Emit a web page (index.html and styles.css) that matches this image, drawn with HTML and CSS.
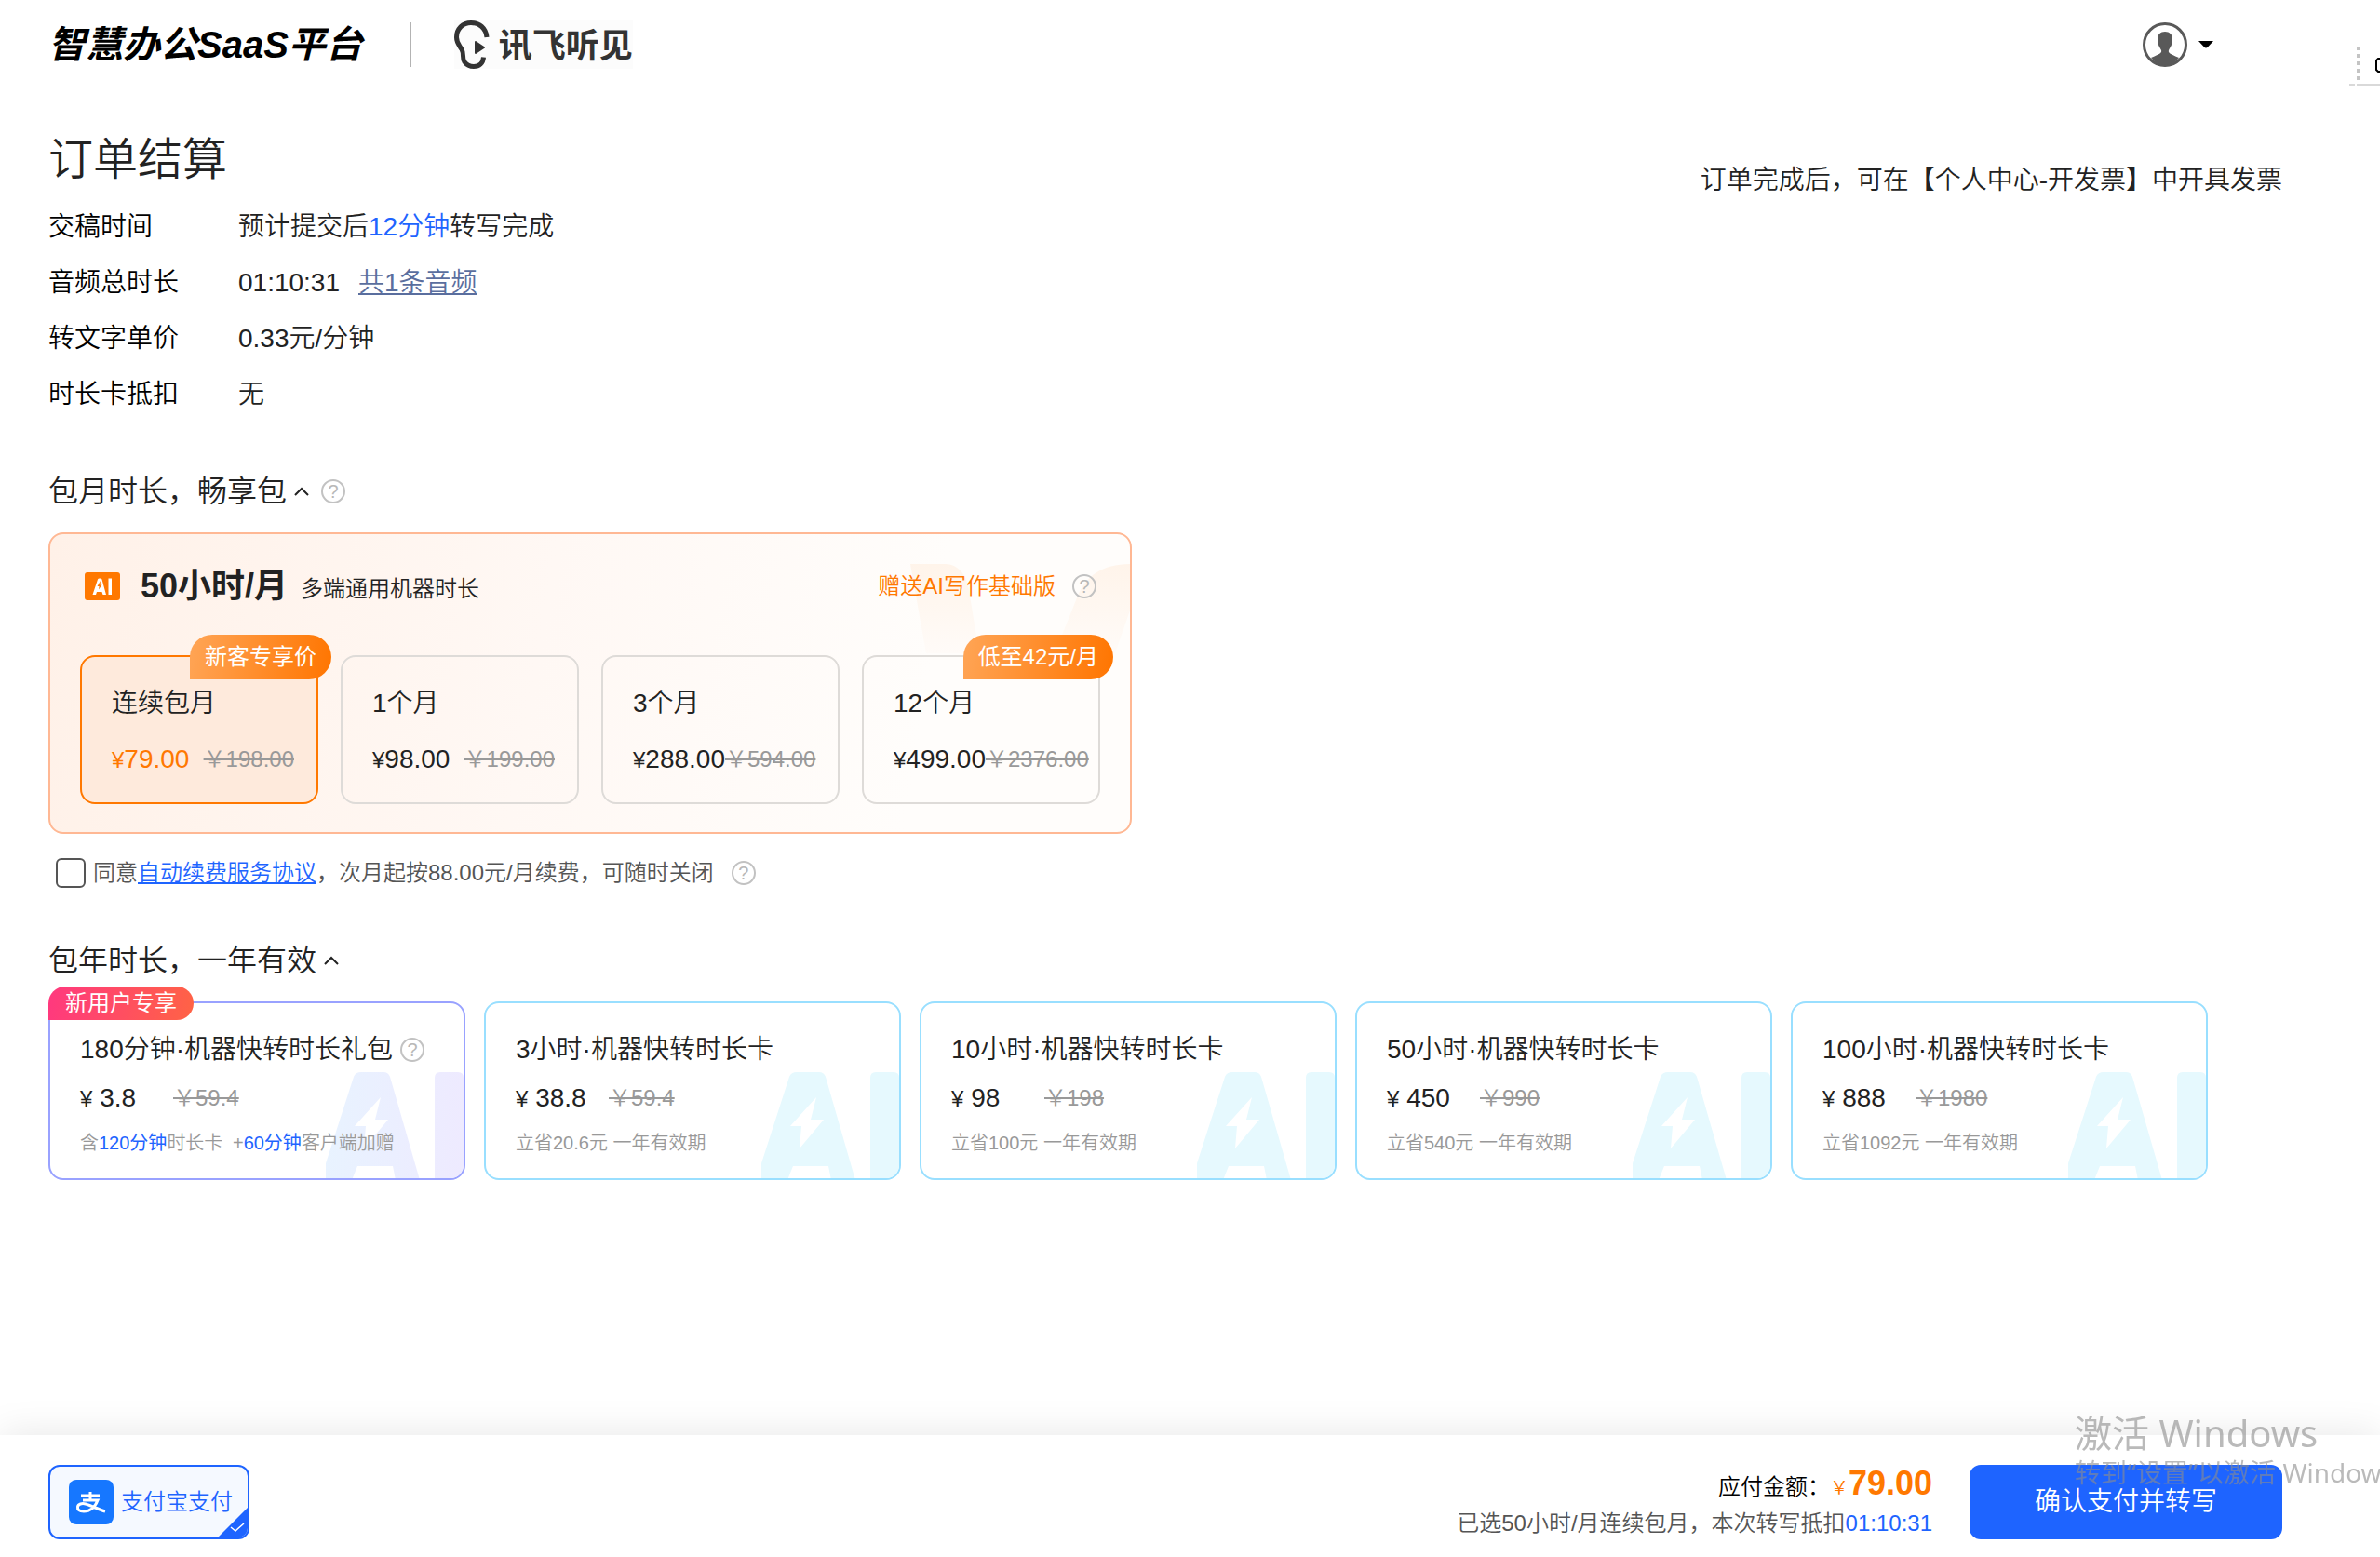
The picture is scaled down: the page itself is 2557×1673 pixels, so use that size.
FILE: index.html
```html
<!DOCTYPE html>
<html lang="zh-CN">
<head>
<meta charset="utf-8">
<title>订单结算 - 讯飞听见</title>
<link rel="stylesheet" href="styles.css">
</head>
<body>
<svg class="defs" width="0" height="0" aria-hidden="true">
  <defs>
    <linearGradient id="violet" gradientUnits="userSpaceOnUse" x1="0" y1="0" x2="150" y2="0">
      <stop offset="0" stop-color="#e8f3ff"/>
      <stop offset="1" stop-color="#eeeaff"/>
    </linearGradient>
    <linearGradient id="peach" x1="0" y1="0" x2="0" y2="1">
      <stop offset="0" stop-color="#fff4ea"/>
      <stop offset="1" stop-color="#fffbf8"/>
    </linearGradient>
    <symbol id="ai-mark" viewBox="0 0 150 114">
      <path fill-rule="evenodd" d="M40 0H64Q69 0 71 5L103 116H77L74 101H36L30 116H2V98L32 5Q34 0 40 0ZM61 27L33 58H45L43 82L69 51H55ZM125 0H144Q150 0 150 6V116H119V6Q119 0 125 0Z"/>
    </symbol>
    <symbol id="chevron" viewBox="0 0 18 12">
      <path d="M2 10L9 3L16 10" fill="none" stroke="#222" stroke-width="2"/>
    </symbol>
  </defs>
</svg>

<header class="topbar">
  <span class="brand">智慧办公SaaS平台</span>
  <span class="divider"></span>
  <a class="logo" href="#">
    <svg width="38" height="52" viewBox="0 0 38 52" aria-hidden="true">
      <path d="M35 18C34 8 27 2.500 18 2.500C9 2.500 2.500 9 2.500 18C2.500 24 5 26 8 31C11 36 8 40 11 44.500C13.500 48 17 49.500 21 49.500C27 49.500 31 46 31.500 39.500" fill="none" stroke="#333" stroke-width="5"/>
      <path d="M23 23L32 29L23 35Z" fill="#333" stroke="#333" stroke-width="2" stroke-linejoin="round"/>
    </svg>
    <span>讯飞听见</span>
  </a>
  <button class="account" type="button" aria-label="账户">
    <svg width="48" height="48" viewBox="0 0 48 48" aria-hidden="true">
      <circle cx="24" cy="24" r="22.500" fill="none" stroke="#595959" stroke-width="3"/>
      <path d="M24 10C29 10 32 13 32 18C32 24 30 26 28 30C27 33 30 34 39 38Q33 46 24 46Q15 46 9 38C18 34 21 33 20 30C18 26 16 24 16 18C16 13 19 10 24 10Z" fill="#595959"/>
    </svg>
    <svg width="16" height="8" viewBox="0 0 16 8" aria-hidden="true"><path d="M0 0H16L10 6.500Q8 8.500 6 6.500Z"/></svg>
  </button>
</header>

<main class="content">
  <div class="title-row">
    <h1>订单结算</h1>
    <p>订单完成后，可在【个人中心-开发票】中开具发票</p>
  </div>

  <dl class="facts">
    <dt>交稿时间</dt><dd>预计提交后<span class="blue">12分钟</span>转写完成</dd>
    <dt>音频总时长</dt><dd>01:10:31<a class="audio-link" href="#">共1条音频</a></dd>
    <dt>转文字单价</dt><dd>0.33元/分钟</dd>
    <dt>时长卡抵扣</dt><dd>无</dd>
  </dl>

  <section>
    <h2>包月时长，畅享包
      <svg class="chevron" width="18" height="12" aria-hidden="true"><use href="#chevron"/></svg>
      <button class="help" type="button">?</button>
    </h2>
    <div class="panel">
      <svg class="panel-mark" width="236" height="96" viewBox="0 0 236 96" aria-hidden="true">
        <path d="M0 0H36C52 0 60 12 63 28L74 96H17Z" fill="url(#peach)"/>
        <path d="M236 0C206 0 188 14 180 34L155 96H220L236 50Z" fill="url(#peach)"/>
      </svg>
      <div class="panel-head">
        <svg class="ai-badge" width="38" height="30" viewBox="0 0 38 30" aria-hidden="true">
          <rect width="38" height="30" rx="3" fill="#ff7800"/>
          <path fill-rule="evenodd" fill="#fff" d="M8.500 24L14 7.500Q14.500 6.500 15.500 6.500H17Q18 6.500 18.500 7.500L23 24H19.500L18.500 21H13L12 24ZM17 9L13.500 15H15.500L15 18.500L18.500 13.500H16.500ZM25.500 6.500H29V24H25.500Z"/>
        </svg>
        <strong>50小时/月</strong>
        <span class="scope">多端通用机器时长</span>
        <a class="gift" href="#">赠送AI写作基础版</a>
        <button class="help" type="button">?</button>
      </div>
      <div class="options">
        <label class="option selected">
          <input type="radio" name="plan" checked>
          <span class="ribbon">新客专享价</span>
          <span class="option-name">连续包月</span>
          <span class="prices"><span class="price"><small>¥</small>79.00</span><del>￥198.00</del></span>
        </label>
        <label class="option">
          <input type="radio" name="plan">
          <span class="option-name">1个月</span>
          <span class="prices"><span class="price"><small>¥</small>98.00</span><del>￥199.00</del></span>
        </label>
        <label class="option">
          <input type="radio" name="plan">
          <span class="option-name">3个月</span>
          <span class="prices"><span class="price"><small>¥</small>288.00</span><del>￥594.00</del></span>
        </label>
        <label class="option">
          <input type="radio" name="plan">
          <span class="ribbon">低至42元/月</span>
          <span class="option-name">12个月</span>
          <span class="prices"><span class="price"><small>¥</small>499.00</span><del>￥2376.00</del></span>
        </label>
      </div>
    </div>
    <div class="agree">
      <input type="checkbox" id="agree">
      <label for="agree">同意<a href="#">自动续费服务协议</a>，次月起按88.00元/月续费，可随时关闭</label>
      <button class="help" type="button">?</button>
    </div>
  </section>

  <section>
    <h2>包年时长，一年有效
      <svg class="chevron" width="18" height="12" aria-hidden="true"><use href="#chevron"/></svg>
    </h2>
    <div class="cards">
      <div class="card gift-card">
        <svg class="card-mark" width="150" height="114" fill="url(#violet)" aria-hidden="true"><use href="#ai-mark"/></svg>
        <span class="tag">新用户专享</span>
        <label><input type="radio" name="plan">180分钟·机器快转时长礼包</label>
        <button class="help" type="button">?</button>
        <p class="card-price"><span class="price"><small>¥</small> 3.8</span><del>￥59.4</del></p>
        <p class="note">含<b>120分钟</b>时长卡 <i>+</i><b>60分钟</b>客户端加赠</p>
      </div>
      <div class="card">
        <svg class="card-mark" width="150" height="114" fill="#e6f9fe" aria-hidden="true"><use href="#ai-mark"/></svg>
        <label><input type="radio" name="plan">3小时·机器快转时长卡</label>
        <p class="card-price"><span class="price"><small>¥</small> 38.8</span><del>￥59.4</del></p>
        <p class="note">立省20.6元 一年有效期</p>
      </div>
      <div class="card">
        <svg class="card-mark" width="150" height="114" fill="#e6f9fe" aria-hidden="true"><use href="#ai-mark"/></svg>
        <label><input type="radio" name="plan">10小时·机器快转时长卡</label>
        <p class="card-price"><span class="price"><small>¥</small> 98</span><del>￥198</del></p>
        <p class="note">立省100元 一年有效期</p>
      </div>
      <div class="card">
        <svg class="card-mark" width="150" height="114" fill="#e6f9fe" aria-hidden="true"><use href="#ai-mark"/></svg>
        <label><input type="radio" name="plan">50小时·机器快转时长卡</label>
        <p class="card-price"><span class="price"><small>¥</small> 450</span><del>￥990</del></p>
        <p class="note">立省540元 一年有效期</p>
      </div>
      <div class="card">
        <svg class="card-mark" width="150" height="114" fill="#e6f9fe" aria-hidden="true"><use href="#ai-mark"/></svg>
        <label><input type="radio" name="plan">100小时·机器快转时长卡</label>
        <p class="card-price"><span class="price"><small>¥</small> 888</span><del>￥1980</del></p>
        <p class="note">立省1092元 一年有效期</p>
      </div>
    </div>
  </section>
</main>

<footer class="paybar">
  <label class="method">
    <input type="radio" name="method" checked>
    <svg width="48" height="48" viewBox="0 0 48 48" aria-hidden="true">
      <rect width="48" height="48" rx="8" fill="#1677ff"/>
      <path d="M13 17H33M23 13V22M15 22H31C29 27 25 34 16 34C11 34 9 32 9.500 29C10 26 14 25 18 26C25 28 32 32 39 34" fill="none" stroke="#fff" stroke-width="3"/>
    </svg>
    <span>支付宝支付</span>
    <svg class="corner" width="34" height="34" viewBox="0 0 34 34" aria-hidden="true">
      <path d="M34 0V34H0Z" fill="#1e64ff"/>
      <path d="M15 22L20 26L29 18" fill="none" stroke="#fff" stroke-width="1.500"/>
    </svg>
  </label>
  <div class="total">
    <p>应付金额：<span class="yen">￥</span><strong>79.00</strong></p>
    <p class="detail">已选50小时/月连续包月，本次转写抵扣<span class="blue">01:10:31</span></p>
  </div>
  <button class="confirm" type="button">确认支付并转写</button>
</footer>

<div class="toolbar" aria-hidden="true">
  <svg width="33" height="42" viewBox="0 0 33 42">
    <path d="M10 0V38" stroke="#c4c4c4" stroke-width="4" stroke-dasharray="4 4"/>
    <path d="M0 41H6M8 41H33" stroke="#d9d9d9" stroke-width="2"/>
    <path d="M33 13H31L29 15V25L31 27H33" fill="none" stroke="#000" stroke-width="2"/>
  </svg>
</div>
<div class="activate">
  <p class="activate-title">激活 Windows</p>
  <p>转到“设置”以激活 Windows。</p>
</div>
</body>
</html>
```
FILE: styles.css
```css
* { box-sizing: border-box; }

body {
  margin: 0;
  min-height: 100vh;
  display: flex;
  flex-direction: column;
  overflow-x: hidden;
  background: #fff;
  color: #222;
  font: 350 28px/40px "Liberation Sans", "Noto Sans CJK SC", sans-serif;
}

h1, h2, p, dl, dd { margin: 0; font-weight: inherit; }
button, input { margin: 0; font: inherit; }
strong { font-weight: 700; }
svg { flex: none; }
.defs { position: absolute; }
.blue { color: #1e64ff; }

.topbar {
  display: flex;
  align-items: center;
  height: 96px;
  padding: 0 179px 0 52px;
}
.brand {
  color: #000;
  font-size: 40px;
  font-weight: 700;
  font-style: italic;
  white-space: nowrap;
}
.divider {
  width: 2px;
  height: 48px;
  margin: 0 46px 0 50px;
  background: #b3b3b3;
}
.logo {
  display: flex;
  align-items: center;
  gap: 10px;
  color: #333;
  font-size: 36px;
  font-weight: 700;
  text-decoration: none;
  background: #fcfcfc;
}
.logo span { padding-top: 4px; }
.account {
  display: flex;
  align-items: center;
  gap: 12px;
  margin-left: auto;
  padding: 0;
  border: 0;
  background: none;
}

.content { flex: 1; padding: 34px 105px 48px 52px; }
.title-row {
  display: flex;
  align-items: flex-end;
  justify-content: space-between;
}
h1 { font-size: 48px; line-height: 84px; }

.facts {
  display: grid;
  grid-template-columns: 204px 1fr;
  line-height: 60px;
}
.facts dt { color: #000; }
.audio-link { margin-left: 20px; color: #5a6e9e; }

section { margin-top: 50px; }
h2 {
  display: flex;
  align-items: center;
  font-size: 32px;
  line-height: 48px;
}
.chevron { margin-left: 7px; }
.help {
  flex: none;
  width: 26px;
  height: 26px;
  padding: 0;
  border: 2px solid #c2c2c2;
  border-radius: 50%;
  background: none;
  color: #b8b8b8;
  font-size: 20px;
  line-height: 22px;
}
h2 .help { margin-left: 12px; }

.panel {
  position: relative;
  width: fit-content;
  margin-top: 20px;
  padding: 32px 32px 30px;
  border: 2px solid #ffb894;
  border-radius: 16px;
  background: linear-gradient(100deg, #fff1e8, #fff8f4 45%, #fffdfb 80%);
}
.panel-mark { position: absolute; top: 32px; right: 0; }
.panel-head {
  position: relative;
  display: flex;
  align-items: center;
  height: 48px;
  padding-left: 5px;
  font-size: 24px;
}
.panel-head strong { margin: 0 14px 0 22px; font-size: 36px; }
.scope { padding-top: 6px; }
.gift { margin-left: auto; color: #ff7800; text-decoration: none; }
.panel-head .help { margin: 0 4px 0 18px; }

.options { display: flex; gap: 24px; margin-top: 50px; }
.option {
  position: relative;
  display: flex;
  flex-direction: column;
  gap: 20px;
  width: 256px;
  height: 160px;
  padding: 30px 24px 0 32px;
  border: 2px solid #dedbd8;
  border-radius: 16px;
}
.option input, .card input, .method input {
  position: absolute;
  opacity: 0;
}
.selected { border-color: #ff7800; background: #feeadc; }
.selected .price { color: #ff7800; }
.prices { display: flex; justify-content: space-between; white-space: nowrap; }
small { font-size: 24px; }
del { color: #999; font-size: 24px; }
.ribbon {
  position: absolute;
  top: -24px;
  right: -16px;
  height: 48px;
  padding: 0 16px;
  border-radius: 24px 24px 24px 0;
  background: linear-gradient(100deg, #ffa556, #ff7500);
  color: #fff;
  font-size: 24px;
  font-weight: 400;
  line-height: 48px;
  white-space: nowrap;
}

.agree {
  display: flex;
  align-items: center;
  margin: 22px 0 0 8px;
  color: #555;
  font-size: 24px;
}
.agree input {
  appearance: none;
  width: 32px;
  height: 32px;
  margin-right: 8px;
  border: 2px solid #555;
  border-radius: 6px;
}
.agree a { color: #1e64ff; }
.agree .help { margin-left: 19px; }

.cards { display: flex; gap: 20px; margin-top: 20px; }
.card {
  position: relative;
  display: grid;
  grid-template-columns: auto 1fr;
  align-content: start;
  align-items: center;
  column-gap: 8px;
  width: 448px;
  height: 192px;
  padding: 30px 32px 0;
  border: 2px solid #99dfff;
  border-radius: 16px;
  white-space: nowrap;
}
.gift-card { border-color: #99a2ff; }
.card-mark {
  position: absolute;
  right: 0;
  bottom: 0;
  border-bottom-right-radius: 14px;
}
.card label, .card p { position: relative; }
.card p { grid-column: 1 / -1; }
.card-price { display: flex; margin-top: 12px; }
.card-price .price { min-width: 100px; }
.note { margin-top: 7px; color: #999; font-size: 20px; }
.note b { color: #1e64ff; font-weight: 400; }
.note i { margin-left: 5px; font-style: normal; }
.tag {
  position: absolute;
  top: -18px;
  left: -2px;
  height: 36px;
  padding: 0 18px;
  border-radius: 18px 18px 18px 0;
  background: linear-gradient(100deg, #ff387f, #ff6345);
  color: #fff;
  font-size: 24px;
  font-weight: 400;
  line-height: 36px;
}

.paybar {
  display: flex;
  align-items: flex-start;
  height: 131px;
  padding: 32px 105px 0 52px;
  background: #fff;
  box-shadow: 0 0 40px rgba(0, 0, 0, .1);
}
.method {
  position: relative;
  display: flex;
  align-items: center;
  gap: 8px;
  width: 216px;
  height: 80px;
  padding-left: 20px;
  border: 2px solid #1e64ff;
  border-radius: 12px;
  overflow: hidden;
  background: #f5f9ff;
  color: #1e64ff;
  font-size: 24px;
}
.corner { position: absolute; right: -1px; bottom: -1px; }
.total {
  margin-left: auto;
  color: #000;
  font-size: 24px;
  text-align: right;
}
.total strong { color: #ff7800; font-size: 36px; }
.yen { color: #ff7800; font-size: 20px; }
.total .detail { color: #555; line-height: 36px; }
.confirm {
  width: 336px;
  height: 80px;
  margin-left: 40px;
  border: 0;
  border-radius: 12px;
  background: #1e64ff;
  color: #fff;
}

.toolbar { position: absolute; top: 50px; right: 0; line-height: 0; }
.activate {
  position: fixed;
  right: 0;
  bottom: 73px;
  width: 328px;
  overflow: hidden;
  color: rgba(140, 140, 140, .6);
  font: 400 28px/36px "Noto Sans", "Noto Sans CJK SC", sans-serif;
  white-space: nowrap;
  pointer-events: none;
}
.activate-title { font-size: 40px; line-height: 48px; }
```
